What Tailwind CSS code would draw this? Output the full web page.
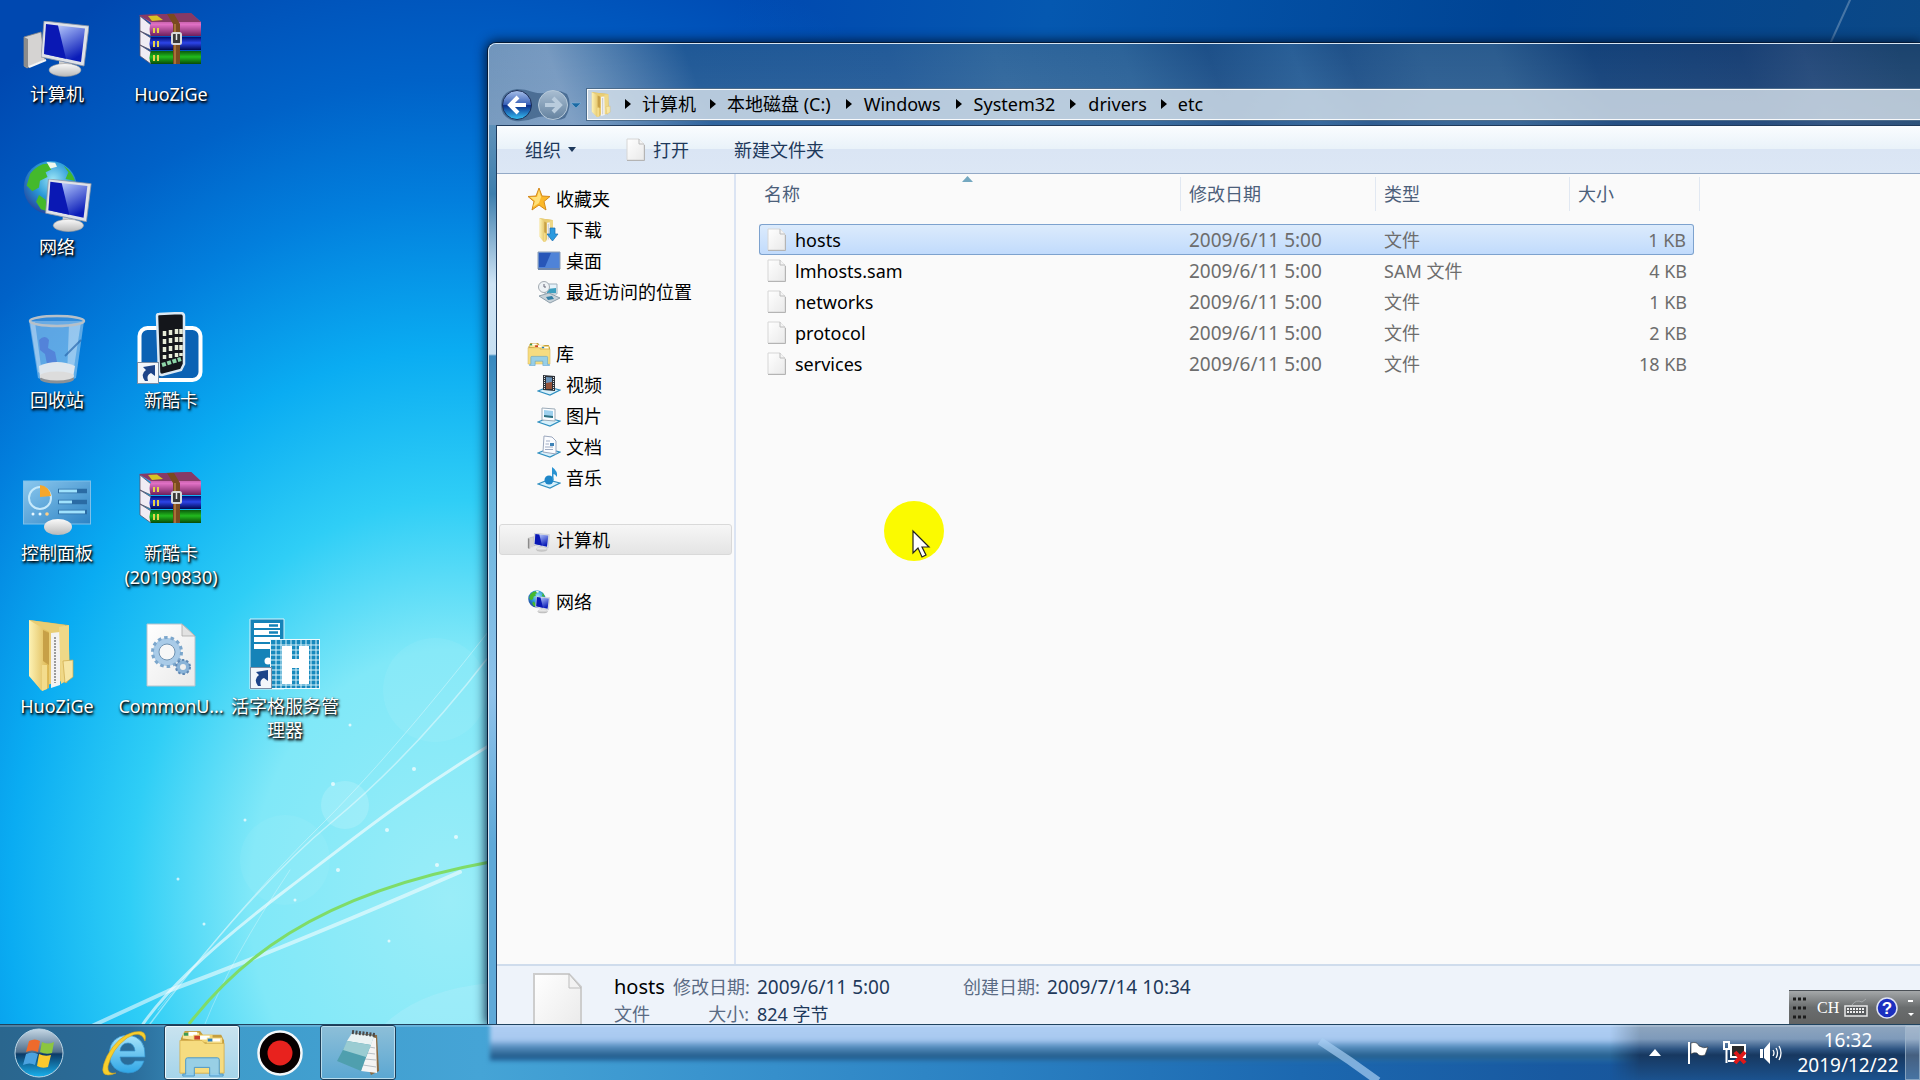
<!DOCTYPE html>
<html lang="zh-CN">
<head>
<meta charset="utf-8">
<title>etc</title>
<script src="https://cdn.jsdelivr.net/npm/@tailwindcss/browser@4"></script>
</head>
<body class="flex h-screen flex-col overflow-hidden bg-[#0048b0] font-['Noto_Sans','Noto_Sans_CJK_SC',sans-serif] text-[18px] leading-6 text-black">

<!-- Shared icon symbols -->
<svg class="absolute h-0 w-0" aria-hidden="true">
  <defs>
    <linearGradient id="screen" x1="0" y1="0" x2="0.6" y2="1"><stop offset="0" stop-color="#e8eeff"/><stop offset=".35" stop-color="#8fa2ee"/><stop offset="1" stop-color="#0a1cb8"/></linearGradient>
    <linearGradient id="metal" x1="0" y1="0" x2="0" y2="1"><stop offset="0" stop-color="#fafafa"/><stop offset="1" stop-color="#b9b9b9"/></linearGradient>
    <radialGradient id="earth" cx=".55" cy=".35" r=".7"><stop offset="0" stop-color="#9be4f6"/><stop offset=".5" stop-color="#2b9ad8"/><stop offset="1" stop-color="#23409a"/></radialGradient>
    <linearGradient id="folder" x1="0" y1="0" x2="1" y2="0"><stop offset="0" stop-color="#fdf2b4"/><stop offset="1" stop-color="#dcb650"/></linearGradient>
    <linearGradient id="pink" x1="0" y1="0" x2="0" y2="1"><stop offset="0" stop-color="#7d3560"/><stop offset=".5" stop-color="#e070c4"/><stop offset="1" stop-color="#6d1f5c"/></linearGradient>
    <linearGradient id="blue" x1="0" y1="0" x2="0" y2="1"><stop offset="0" stop-color="#000c70"/><stop offset=".45" stop-color="#2c44e8"/><stop offset="1" stop-color="#000850"/></linearGradient>
    <linearGradient id="green" x1="0" y1="0" x2="0" y2="1"><stop offset="0" stop-color="#0b5a0b"/><stop offset=".45" stop-color="#22bb1e"/><stop offset="1" stop-color="#084a08"/></linearGradient>
    <linearGradient id="paper" x1="0" y1="0" x2="1" y2="1"><stop offset="0" stop-color="#ffffff"/><stop offset="1" stop-color="#e9e9e9"/></linearGradient>
    <linearGradient id="glass" x1="0" y1="0" x2="1" y2="1"><stop offset="0" stop-color="#8cc8ee"/><stop offset="1" stop-color="#2d83c4"/></linearGradient>

    <symbol id="i-monitor" viewBox="0 0 48 56">
      <path d="M3 0 48 5 43 45 0 36Z" fill="#dfe2e8" stroke="#8c94a3" stroke-width=".8"/>
      <path d="M5 3 44 7.500 40 41 3 33Z" fill="url(#screen)"/>
      <path d="M5 3 17 4.500 25 37.800 3 33Z" fill="#0a18b4"/>
      <path d="M18 40 31 43 30 49 18 48Z" fill="#cfcfcf"/>
      <ellipse cx="24" cy="49" rx="16" ry="6.500" fill="url(#metal)" stroke="#9a9a9a" stroke-width=".6"/>
    </symbol>
    <symbol id="i-computer" viewBox="0 0 72 72">
      <path d="M3 31 20 26 24 54 6 62 3 60Z" fill="#d5d3d2" stroke="#858585" stroke-width=".8"/>
      <path d="M3 31 7 33 7 62 3 60Z" fill="#8b8b8b"/>
      <path d="M8 61 25 54" stroke="#f5f5f5" stroke-width="2"/>
      <use href="#i-monitor" x="20" y="15" width="48" height="56"/>
    </symbol>
    <symbol id="i-network" viewBox="0 0 72 78">
      <circle cx="29" cy="29" r="28" fill="url(#earth)"/>
      <path d="M8 14Q17 3 27 4L30 10 24 13 26 18 18 22 17 29 10 33 4 27ZM43 6Q52 12 55 22L45 20 48 13ZM17 37 24 42 26 54 19 52 14 44Z" fill="#44b92c"/>
      <path d="M25 2 34 3 36 7 29 9Z" fill="#eef8ee"/>
      <use href="#i-monitor" x="23" y="20" width="50" height="56"/>
    </symbol>
    <symbol id="i-rar" viewBox="0 0 64 52">
      <path d="M1 3 12 12V23L1 18ZM1 18 12 25V37L1 32ZM1 32 12 39V51L1 43Z" fill="#f0ecf4" stroke="#5a5266" stroke-width=".8"/>
      <path d="M0 2 52 0 62 9V23H12Q9 16 12 10Z" fill="url(#pink)"/>
      <path d="M0 2 52 0 62 9H12Z" fill="#863a66"/>
      <path d="M9 3 18 2.500 24 7 13 8Z" fill="#d8c224"/>
      <path d="M12 24H62V37H12Q9 31 12 24Z" fill="url(#blue)"/>
      <path d="M12 38H62V51H12Q9 45 12 38Z" fill="url(#green)"/>
      <path d="M15 15V20M19 15V20M15 28V34M19 28V34M15 42V48M19 42V48" stroke="#e6d34a" stroke-width="2"/>
      <path d="M28 1H35L41 11V51H34V11Z" fill="#7a4a20"/>
      <path d="M36 11V51" stroke="#b98140" stroke-width="1.500"/>
      <rect x="33" y="20" width="9" height="11" rx="1.500" fill="#393939" stroke="#d9d9d9" stroke-width="2"/>
      <path d="M37.500 21V27" stroke="#e8e8e8" stroke-width="1.500"/>
    </symbol>
    <symbol id="i-page" viewBox="0 0 20 24">
      <path d="M1 1H13L18 6V22H1Z" fill="url(#paper)" stroke="#d6d6d6" stroke-width="1"/>
      <path d="M13 1V6H18" fill="#f4f4f4" stroke="#bcbcbc" stroke-width="1"/>
      <path d="M1 22.500H18.500V7" fill="none" stroke="#b4b4b4" stroke-width="1"/>
    </symbol>
    <symbol id="i-shortcut" viewBox="0 0 22 22">
      <rect x=".5" y=".5" width="21" height="21" fill="#f3f6fa" stroke="#7d8ea4"/>
      <path d="M8 19Q3 12 9 8L6 5 18 3V14L14 11Q9 13 11 19Z" fill="#1d4488"/>
    </symbol>
    <symbol id="i-libfolder" viewBox="0 0 50 50">
      <path d="M3 10 7 2H23L26 6H45L48 12V46H3Z" fill="#c59e3e"/>
      <path d="M5 10V4H22V12Z" fill="#f9e59a"/><path d="M6 4H11V7H6Z" fill="#3d9a55"/><path d="M11 3H20V7H11Z" fill="#fff"/>
      <path d="M16 14V6H36V14Z" fill="#f4d673"/><path d="M17 7H23V11H17Z" fill="#c8402e"/><path d="M23 7H33V11H23Z" fill="#fff"/>
      <path d="M30 16V9H46V16Z" fill="#f7de86"/><path d="M31 10H36V13H31Z" fill="#2a7fc0"/><path d="M36 10H44V13H36Z" fill="#fff"/>
      <path d="M2 12H25L28 15H48V46H2Z" fill="#f6dc80" stroke="#d2ac4a" stroke-width=".8"/>
      <path d="M8 32Q8 30 10 30H41Q43 30 43 32V47H47V49H33V40H17V49H5V47H8Z" fill="#8ecdf0" stroke="#4a96c8" stroke-width="1" fill-opacity=".9"/>
    </symbol>
    <symbol id="i-folder" viewBox="0 0 48 72">
      <path d="M2 1 41 6 43 50 40 64 18 58Z" fill="#d9b758"/>
      <path d="M2 1 38 6 38 61 20 66 14 71 2 56Z" fill="#e9cd74"/>
      <path d="M24 14 33 13 33 66 24 69Z" fill="#f3f3f3"/><path d="M28 18V64" stroke="#9c9c9c" stroke-width="2" stroke-dasharray="2 1"/>
      <path d="M32 8 42 6 42 60 34 65Z" fill="#efd887"/>
      <path d="M2 1 22 13V69L15 72 2 57Z" fill="url(#folder)"/>
      <path d="M16 11 22 14V46L16 42Z" fill="#c7a047"/>
      <path d="M15 46H20V70L15 72Z" fill="#f3dc8c"/>
      <path d="M36 42 46 41V58L38 64Z" fill="#f7e6a4" stroke="#cda94b" stroke-width=".7"/>
    </symbol>
    <symbol id="i-tray" viewBox="0 0 24 10"><path d="M1 5 11 1 23 4 13 9Z" fill="#d8f0fb" stroke="#2f8fc0" stroke-width="1.200"/></symbol>
    <linearGradient id="orb" x1="0" y1="0" x2="0" y2="1"><stop offset="0" stop-color="#c4d6e4"/><stop offset=".48" stop-color="#4f6f8c"/><stop offset=".52" stop-color="#0c3a66"/><stop offset="1" stop-color="#19b2ee"/></linearGradient>
    <linearGradient id="navon" x1="0" y1="0" x2="0" y2="1"><stop offset="0" stop-color="#a9c1ea"/><stop offset=".48" stop-color="#3a62b8"/><stop offset=".52" stop-color="#0b2f8c"/><stop offset="1" stop-color="#39c3f5"/></linearGradient>
    <linearGradient id="navoff" x1="0" y1="0" x2="0" y2="1"><stop offset="0" stop-color="#a9bed2"/><stop offset="1" stop-color="#64829f"/></linearGradient>
    <linearGradient id="iebar" x1="0" y1="0" x2="0" y2="1"><stop offset="0" stop-color="#a8e4fb"/><stop offset="1" stop-color="#2fa6e6"/></linearGradient>
  </defs>
</svg>

<main class="relative min-h-0 flex-1 overflow-hidden bg-[linear-gradient(100deg,transparent_35%,#0558b0_50%,#004494_72%,#104a80_100%),radial-gradient(ellipse_800px_1000px_at_450px_900px,#9aedf8_0%,#80e8f8_25%,#2fcef6_40%,#0aacf2_55%,#027fdd_70%,#0062c8_82%,#0048b0_100%)]">
  <!-- Wallpaper light trails -->
  <svg class="absolute inset-0 h-full w-full" aria-hidden="true">
    <circle cx="435" cy="690" r="52" fill="#fff" opacity=".06"/><circle cx="345" cy="805" r="24" fill="#fff" opacity=".15"/><circle cx="285" cy="860" r="45" fill="#fff" opacity=".05"/>
    <path d="M385 1024Q420 990 490 983V1024Z" fill="#b8eefb" opacity=".3"/>
    <g fill="none" stroke="#fff" stroke-linecap="round">
      <path d="M143 1024C170 985 220 940 286 890S400 800 490 745" stroke-width="3" opacity=".6"/>
      <path d="M150 1024Q250 890 332 822T490 655" stroke-width="1.500" opacity=".45"/>
      <path d="M158 1010Q250 895 320 826T488 632" stroke-width="1" opacity=".35"/>
      <path d="M92 1026 168 991Q280 950 460 872" stroke-width="4" opacity=".55"/>
      <path d="M205 1024Q230 960 290 870" stroke-width="1" opacity=".3"/>
      <path d="M1830 44 1850 0" stroke-width="2" opacity=".25"/>
    </g>
    <path d="M189 1024C235 965 310 895 490 862" fill="none" stroke="#7fdc68" stroke-width="3"/>
    <g fill="#fff" opacity=".7"><circle cx="333" cy="784" r="2"/><circle cx="338" cy="870" r="2"/><circle cx="414" cy="769" r="2"/><circle cx="387" cy="830" r="2"/><circle cx="456" cy="837" r="2"/><circle cx="437" cy="865" r="2"/><circle cx="204" cy="924" r="1.500"/><circle cx="245" cy="820" r="1.500"/><circle cx="389" cy="941" r="1.500"/><circle cx="295" cy="900" r="1.500"/><circle cx="350" cy="725" r="1.500"/><circle cx="178" cy="879" r="1.500"/></g>
  </svg>

  <!-- Desktop shortcuts -->
  <div class="relative grid w-max auto-rows-[153px] grid-cols-[114px_114px_114px] pt-[6px] text-center text-white [text-shadow:1px_1px_2px_#000,1px_2px_3px_#000]">
    <div class="col-start-1 row-start-1 flex flex-col items-center">
      <svg class="h-[76px] w-[72px] pb-[4px]" viewBox="0 0 72 72"><use href="#i-computer" width="72" height="72"/></svg><span>计算机</span>
    </div>
    <div class="col-start-2 row-start-1 flex flex-col items-center">
      <svg class="h-[76px] w-[72px]" viewBox="0 0 72 76"><use href="#i-rar" x="4" y="7" width="64" height="52"/></svg><span>HuoZiGe</span>
    </div>
    <div class="col-start-1 row-start-2 flex flex-col items-center">
      <svg class="h-[76px] w-[72px]" viewBox="0 0 72 76"><use href="#i-network" x="1" y="1" width="70" height="74"/></svg><span>网络</span>
    </div>
    <div class="col-start-1 row-start-3 flex flex-col items-center">
      <svg class="h-[76px] w-[72px]" viewBox="0 0 72 76">
        <path d="M8 9 63 9 55 66Q36 75 17 66Z" fill="#cfe6f8" fill-opacity=".45"/>
        <path d="M9 10 14 10 21 62 17 60ZM48 12 60 10 52 62 46 64Z" fill="#fff" opacity=".35"/>
        <path d="M18 28Q24 22 28 28L27 36 34 40 36 50 26 52 24 42 19 38Z" fill="#4a5fcd" opacity=".5"/><path d="M44 44 60 28" stroke="#2b69ae" stroke-width="2" opacity=".7"/>
        <path d="M18 54Q36 46 54 54L52 66Q36 73 19 66Z" fill="#dfe7ee"/><ellipse cx="36" cy="67" rx="17" ry="4.500" fill="#8c9196"/><ellipse cx="36" cy="64" rx="17" ry="4.500" fill="#dcdcdc"/>
        <ellipse cx="36" cy="9" rx="27" ry="5" fill="#7db5e6" fill-opacity=".4" stroke="#b7c0c8" stroke-width="2.500"/>
      </svg><span>回收站</span>
    </div>
    <div class="col-start-2 row-start-3 flex flex-col items-center">
      <svg class="h-[76px] w-[72px]" viewBox="0 0 72 76">
        <rect x="4.500" y="16" width="61" height="52" rx="8" fill="#0b62b4" stroke="#fff" stroke-width="4"/>
        <path d="M22 4Q22 2 24 2L45 1Q49 1 49 4V52L46 58 27 63Q24 63 24 60Z" fill="#14161b" stroke="#dbe9f4" stroke-width="2.500"/>
        <path d="M29.500 19V47M35.500 18V46M41.500 17V45M46 17V44" stroke="#e7ecd8" stroke-width="3.500" stroke-dasharray="5 3"/><path d="M27 53 46 47" stroke="#8ed6a8" stroke-width="4" stroke-dasharray="4 1.500"/>
        <use href="#i-shortcut" x="2" y="50" width="22" height="22"/>
      </svg><span>新酷卡</span>
    </div>
    <div class="col-start-1 row-start-4 flex flex-col items-center">
      <svg class="h-[76px] w-[72px]" viewBox="0 0 72 76">
        <rect x="2.500" y="16" width="67" height="43" fill="url(#glass)" stroke="#7fc0ea"/>
        <circle cx="19" cy="33" r="11" fill="none" stroke="#c6e9fb" stroke-width="2"/><path d="M19 32V20A12 12 0 0 1 30 31Z" fill="#f6a72c"/>
        <path d="M37 26H66M37 37H66M37 47H66" stroke="#2a6ba4" stroke-width="4.500"/><path d="M38 26H56M38 37H51M38 47H64" stroke="#9fe2fd" stroke-width="3"/>
        <circle cx="12" cy="49" r="1.500" fill="#e8f7ff"/><circle cx="19" cy="49" r="1.500" fill="#e8f7ff"/><circle cx="26" cy="49" r="1.800" fill="#ffcf87"/>
        <ellipse cx="37" cy="62" rx="14" ry="8" fill="url(#metal)"/>
      </svg><span>控制面板</span>
    </div>
    <div class="col-start-2 row-start-4 flex flex-col items-center">
      <svg class="h-[76px] w-[72px]" viewBox="0 0 72 76"><use href="#i-rar" x="4" y="7" width="64" height="52"/></svg><span>新酷卡</span><span>(20190830)</span>
    </div>
    <div class="col-start-1 row-start-5 flex flex-col items-center">
      <svg class="h-[76px] w-[72px]" viewBox="0 0 72 76"><use href="#i-folder" x="6" y="1" width="48" height="72"/></svg><span>HuoZiGe</span>
    </div>
    <div class="col-start-2 row-start-5 flex flex-col items-center">
      <svg class="h-[76px] w-[72px]" viewBox="0 0 72 76">
        <path d="M12 6H47L60 18V68H12Z" fill="url(#paper)" stroke="#b9c3cc"/><path d="M47 6V18H60Z" fill="#e2e2e2" stroke="#aaa" stroke-width=".8"/>
        <circle cx="32" cy="34" r="11" fill="none" stroke="#a9cbe8" stroke-width="6"/><circle cx="32" cy="34" r="14.500" fill="none" stroke="#7ba6cc" stroke-width="3" stroke-dasharray="3.500 3"/><circle cx="32" cy="34" r="8" fill="#f7f7f7" stroke="#6f92b2"/>
        <circle cx="48" cy="49" r="5" fill="none" stroke="#8ab3d8" stroke-width="4"/><circle cx="48" cy="49" r="7" fill="none" stroke="#5f88b4" stroke-width="2" stroke-dasharray="2.500 2"/>
      </svg><span>CommonU...</span>
    </div>
    <div class="col-start-3 row-start-5 flex flex-col items-center">
      <svg class="h-[76px] w-[72px]" viewBox="0 0 72 76">
        <path d="M1 1H35V71H1Z" fill="#1583b8" stroke="#d8f3fb"/>
        <path d="M5 5H31V10H5ZM5 12H31V17H5ZM5 19H31V24H5ZM5 26H21V31H5Z" fill="#fff"/><path d="M20 7.500H29M20 14.500H29" stroke="#1583b8" stroke-width="2.500"/><circle cx="19" cy="43" r="3.500" fill="#fff"/>
        <rect x="21" y="21" width="50" height="50" fill="#eefafd"/>
        <path d="M22 22H70V70H22Z" fill="#1789bd"/>
        <path d="M22 27H70M22 32H70M22 37H70M22 42H70M22 47H70M22 52H70M22 57H70M22 62H70M22 67H70M27 22V70M32 22V70M37 22V70M42 22V70M47 22V70M52 22V70M57 22V70M62 22V70M67 22V70" stroke="#d6f2fb"/>
        <path d="M33 28H43V41H50V28H60V66H50V50H43V66H33Z" fill="#fff"/>
        <use href="#i-shortcut" x="1" y="49" width="22" height="22"/>
      </svg><span class="w-[112px]">活字格服务管理器</span>
    </div>
  </div>

  <!-- Explorer window -->
  <section class="absolute top-[43px] right-0 bottom-0 left-[488px] flex flex-col rounded-tl-lg border-t border-l border-[#d7e6f4] bg-[linear-gradient(to_bottom,#6e93ba_0px,#5b8fb8_90px,#3e7fae_150px,#cfe4f5_240px,#c8e0f2_310px,#3888be_312px,#6bb6de_450px,#8fc2ea_650px,#5fa9d8_800px)] pl-[7px] shadow-[0_0_12px_2px_#001838,0_0_0_1px_#0a2038]">
    <div class="-ml-[7px] flex h-[81px] flex-col justify-end rounded-tl-lg bg-[linear-gradient(to_top,rgba(255,255,255,.08),transparent),linear-gradient(70deg,#6e93ba_0px,#7699c0_80px,#5b86b4_120px,#1f5896_210px,#225a98_400px,#2f669c_500px,#2b6298_620px,#1c4f88_700px,#285e96_780px,#1f5189_830px,#2a5c90_900px,#2a5b8e_970px,#14427a_1060px,#173f74_1200px,#24497a_1260px,#1b436e_1350px)] pb-[4px]">
      <div class="flex h-[33px] items-center">
        <svg class="ml-[10px] h-[34px] w-[86px] shrink-0" viewBox="0 0 86 34" role="img" aria-label="后退 前进">
          <path d="M18 1Q26 1 34 4 44 7 52 3 60 1 68 6 74 17 66 30 58 34 50 30 43 27 36 30 26 34 16 33 2 30 2 17 2 3 18 1Z" fill="#2d5077" opacity=".6"/>
          <circle cx="18" cy="17" r="14.500" fill="url(#navon)" stroke="#1c2e55"/><path d="M19 9 11 17 19 25M12 17H27" fill="none" stroke="#fff" stroke-width="4"/>
          <circle cx="54" cy="17" r="14.500" fill="url(#navoff)" stroke="#b7cada"/><path d="M54 10 61 17 54 24M60 17H46" fill="none" stroke="#b9ccdd" stroke-width="4"/>
          <path d="M72 15H82L77 20Z" fill="#1c6aa4" stroke="#7fb3d8" stroke-width=".6"/>
        </svg>
        <nav aria-label="地址" class="ml-[2px] flex h-[31px] flex-1 items-center border border-r-0 border-white/90 bg-[#d9e4ec]/80 pl-[3px] shadow-[0_0_0_1px_#4c6c8c]">
          <svg class="h-[25px] w-[20px]" viewBox="0 0 48 72" preserveAspectRatio="none"><use href="#i-folder" width="48" height="72"/></svg>
          <ol class="-mt-[2px] flex items-center">
            <li class="flex items-center"><svg class="mr-[11px] ml-[14px] h-[10px] w-[6px]" viewBox="0 0 6 10"><path d="M0 0 6 5 0 10Z"/></svg><a href="#">计算机</a></li>
            <li class="flex items-center"><svg class="mr-[11px] ml-[14px] h-[10px] w-[6px]" viewBox="0 0 6 10"><path d="M0 0 6 5 0 10Z"/></svg><a href="#">本地磁盘 (C:)</a></li>
            <li class="flex items-center"><svg class="mr-[12px] ml-[15px] h-[10px] w-[6px]" viewBox="0 0 6 10"><path d="M0 0 6 5 0 10Z"/></svg><a href="#">Windows</a></li>
            <li class="flex items-center"><svg class="mr-[12px] ml-[15px] h-[10px] w-[6px]" viewBox="0 0 6 10"><path d="M0 0 6 5 0 10Z"/></svg><a href="#">System32</a></li>
            <li class="flex items-center"><svg class="mr-[12px] ml-[15px] h-[10px] w-[6px]" viewBox="0 0 6 10"><path d="M0 0 6 5 0 10Z"/></svg><a href="#">drivers</a></li>
            <li class="flex items-center"><svg class="mr-[11px] ml-[14px] h-[10px] w-[6px]" viewBox="0 0 6 10"><path d="M0 0 6 5 0 10Z"/></svg><a href="#">etc</a></li>
          </ol>
        </nav>
      </div>
    </div>

    <div class="flex min-h-0 flex-1 flex-col border-t border-l border-[#1f3a5c] bg-[#fafafa]">
      <div class="flex h-[48px] shrink-0 items-center border-b border-[#93a9c6] bg-[linear-gradient(to_bottom,#fafdff_0%,#e9f2f9_48%,#dae5f4_50%,#dce7f5_100%)] pl-[28px] text-[#1e395b]">
        <button class="flex w-[101px] items-center gap-[7px]">组织<svg class="h-[5px] w-[8px]" viewBox="0 0 8 5"><path d="M0 0H8L4 5Z" fill="#1e395b"/></svg></button>
        <button class="flex w-[108px] items-center gap-[7px]"><svg class="h-[24px] w-[20px]"><use href="#i-page"/></svg>打开</button>
        <button>新建文件夹</button>
      </div>

      <div class="flex min-h-0 flex-1">
        <nav aria-label="导航窗格" class="w-[239px] shrink-0 border-r-2 border-[#dbe4f3] pt-[9px] pr-[2px] pl-[2px] *:flex *:h-[31px] *:items-center">
          <a href="#" class="gap-[5px] pl-[28px]"><svg class="h-[24px] w-[24px]" viewBox="0 0 24 24"><path d="M12 1 15 9 23 9.500 17 14.500 19 23 12 18 5 23 7 14.500 1 9.500 9 9Z" fill="#fbb829" stroke="#d48a1c"/><path d="M12 3 14 10 12 16 6 20 8 14 3 10 10 10Z" fill="#ffe07a"/></svg>收藏夹</a>
          <a href="#" class="gap-[5px] pl-[38px]"><svg class="h-[24px] w-[24px]" viewBox="0 0 24 24"><use href="#i-folder" x="2" y="0" width="16" height="24"/><path d="M13 10H18V16H21L15.500 23 10 16H13Z" fill="#2b9adf" stroke="#1b6fb0" stroke-width=".7"/></svg>下载</a>
          <a href="#" class="gap-[5px] pl-[38px]"><svg class="h-[24px] w-[24px]" viewBox="0 0 24 24"><path d="M1 3H23V20H1Z" fill="#4f83d8" stroke="#8d9db3"/><path d="M2 4H14L8 18H2Z" fill="#2856b8"/><path d="M1 19H23V21H1Z" fill="#6f87ab"/></svg>桌面</a>
          <a href="#" class="gap-[5px] pl-[38px]"><svg class="h-[24px] w-[24px]" viewBox="0 0 24 24"><path d="M8 4H20V14H8Z" fill="#e5f2fa" stroke="#9fb0bd"/><path d="M10 9 19 8V13H10Z" fill="#3c9fc0"/><circle cx="7" cy="7" r="5.500" fill="#eef2f5" stroke="#a3abb2"/><path d="M7 4V7H9" fill="none" stroke="#667"/><path d="M2 16 12 13 23 18 13 23Z" fill="#c7d2d9" stroke="#8fa0ac"/><path d="M9 17 15 16 17 19 11 20Z" fill="#347fa5"/></svg>最近访问的位置</a>
          <a href="#" class="mt-[31px] gap-[5px] pl-[28px]"><svg class="h-[24px] w-[24px]" viewBox="0 0 50 50"><use href="#i-libfolder" width="50" height="50"/></svg>库</a>
          <a href="#" class="gap-[5px] pl-[38px]"><svg class="h-[24px] w-[24px]" viewBox="0 0 24 24"><use href="#i-tray" y="13" width="24" height="10"/><path d="M6 2 18 3V18L6 17Z" fill="#2c3138"/><path d="M9 4 15 4.500V16L9 15.500Z" fill="#6b93b8"/><path d="M9 10 15 9V16H9Z" fill="#94533a"/><path d="M7.500 3V17M16.500 4V17" stroke="#e4e4e4" stroke-dasharray="1 1"/></svg>视频</a>
          <a href="#" class="gap-[5px] pl-[38px]"><svg class="h-[24px] w-[24px]" viewBox="0 0 24 24"><use href="#i-tray" y="13" width="24" height="10"/><path d="M5 4 18 5V17L5 16Z" fill="#fbfdff" stroke="#9cabb8"/><path d="M7 6 16 7V14L7 13Z" fill="#9dd0ee"/><path d="M7 11 16 12V14L7 13Z" fill="#2e7182"/></svg>图片</a>
          <a href="#" class="gap-[5px] pl-[38px]"><svg class="h-[24px] w-[24px]" viewBox="0 0 24 24"><use href="#i-tray" y="13" width="24" height="10"/><path d="M7 1 15 2 19 6V19L6 17Z" fill="#fbfcff" stroke="#9ca8be"/><path d="M9 6H13M8.500 9H12M8 12H16M8 14.500H16" stroke="#a0acc4"/><path d="M13 8H17V11H13Z" fill="#3f83b8"/></svg>文档</a>
          <a href="#" class="gap-[5px] pl-[38px]"><svg class="h-[24px] w-[24px]" viewBox="0 0 24 24"><use href="#i-tray" y="13" width="24" height="10"/><circle cx="12" cy="14" r="4.500" fill="#1e86c8"/><path d="M15 14V1Q21 5 20 11 18 8 16.500 8V14Z" fill="#2a93d2"/></svg>音乐</a>
          <a href="#" aria-current="page" class="mt-[31px] gap-[5px] rounded-[3px] border border-[#d9d9d9] bg-linear-to-b from-[#f6f6f6] to-[#e4e4e4] pl-[27px]"><svg class="h-[24px] w-[24px]" viewBox="0 0 72 72"><use href="#i-computer" width="72" height="72"/></svg>计算机</a>
          <a href="#" class="mt-[31px] gap-[5px] pl-[28px]"><svg class="h-[24px] w-[24px]" viewBox="0 0 72 78"><use href="#i-network" width="72" height="78"/></svg>网络</a>
        </nav>

        <div class="relative min-w-0 flex-1 pl-[23px]">
          <svg class="absolute top-[2px] left-[226px] h-[6px] w-[11px]" viewBox="0 0 11 6"><path d="M0 6 5.500 0 11 6Z" fill="#74a8c0"/></svg>
          <table class="w-[935px] table-fixed border-separate border-spacing-0 text-left text-[#6d6d6d]">
            <colgroup><col class="w-[421px]"><col class="w-[195px]"><col class="w-[194px]"><col class="w-[125px]"></colgroup>
            <thead class="text-[#4c607a]">
              <tr class="*:h-[50px] *:p-0 *:pb-[10px] *:font-normal">
                <th><span class="pl-[5px]">名称</span></th>
                <th><span class="flex h-[34px] items-center border-l border-[#e1e8f2] pl-[8px]">修改日期</span></th>
                <th><span class="flex h-[34px] items-center border-l border-[#e1e8f2] pl-[8px]">类型</span></th>
                <th><span class="-mr-[6px] flex h-[34px] items-center border-x border-[#e1e8f2] pl-[8px]">大小</span></th>
              </tr>
            </thead>
            <tbody class="[&_td]:h-[31px] [&_td]:p-0 [&_td:nth-child(2)]:pl-[9px] [&_td:nth-child(2)]:text-[19px] [&_td:nth-child(3)]:pl-[9px] [&_td:nth-child(4)]:pr-[7px] [&_td:nth-child(4)]:text-right">
              <tr class="*:border-y *:border-[#7da2ce] *:bg-linear-to-b *:from-[#dcebfc] *:to-[#c1dbfc]">
                <td class="rounded-l-[3px] border-l"><span class="flex items-center gap-[8px] pl-[7px] text-black"><svg class="h-[24px] w-[20px]"><use href="#i-page"/></svg>hosts</span></td><td>2009/6/11 5:00</td><td>文件</td><td class="rounded-r-[3px] border-r">1 KB</td>
              </tr>
              <tr><td><span class="flex items-center gap-[8px] pl-[8px] text-black"><svg class="h-[24px] w-[20px]"><use href="#i-page"/></svg>lmhosts.sam</span></td><td>2009/6/11 5:00</td><td>SAM 文件</td><td>4 KB</td></tr>
              <tr><td><span class="flex items-center gap-[8px] pl-[8px] text-black"><svg class="h-[24px] w-[20px]"><use href="#i-page"/></svg>networks</span></td><td>2009/6/11 5:00</td><td>文件</td><td>1 KB</td></tr>
              <tr><td><span class="flex items-center gap-[8px] pl-[8px] text-black"><svg class="h-[24px] w-[20px]"><use href="#i-page"/></svg>protocol</span></td><td>2009/6/11 5:00</td><td>文件</td><td>2 KB</td></tr>
              <tr><td><span class="flex items-center gap-[8px] pl-[8px] text-black"><svg class="h-[24px] w-[20px]"><use href="#i-page"/></svg>services</span></td><td>2009/6/11 5:00</td><td>文件</td><td>18 KB</td></tr>
            </tbody>
          </table>
        </div>
      </div>

      <footer class="flex h-[60px] shrink-0 overflow-hidden border-t-2 border-[#cfdcec] bg-[#eef3fa] pt-[7px] pl-[36px]">
        <svg class="h-[62px] w-[50px] shrink-0" viewBox="0 0 50 62"><path d="M1 1H36L48 14V61H1Z" fill="url(#paper)" stroke="#cdcdcd" stroke-width="2"/><path d="M36 1V15H48Z" fill="#f2f2f2" stroke="#bdbdbd"/></svg>
        <dl class="ml-[31px] grid grid-cols-[59px_76px_214px_84px_auto] grid-rows-[27px_27px] items-center whitespace-nowrap text-[#1e395b]">
          <dd class="text-[20px] text-black">hosts</dd><dt class="text-[#5a6b84]">修改日期:</dt><dd class="pl-[8px] text-[19px]">2009/6/11 5:00</dd><dt class="text-[#5a6b84]">创建日期:</dt><dd class="text-[19px]">2009/7/14 10:34</dd>
          <dd class="text-[#5a6b84]">文件</dd><dt class="text-right text-[#5a6b84]">大小:</dt><dd class="pl-[8px]">824 字节</dd>
        </dl>
      </footer>
    </div>
  </section>

  <!-- Pointer with its highlight ring -->
  <svg class="absolute top-[500px] left-[883px] h-[62px] w-[62px]" viewBox="0 0 62 62" aria-hidden="true"><circle cx="31" cy="31" r="30" fill="#fbfa00"/><path d="M30 31V53L35 48 39 57 43 55 39 47H46Z" fill="#fff" stroke="#222" stroke-width="1.200"/></svg>

  <!-- Language bar -->
  <div class="absolute right-0 bottom-0 flex h-[34px] w-[131px] items-center border-t border-[#4b5056] bg-linear-to-b from-[#a5a8aa] via-[#6a6d6e] to-[#626363] font-['Liberation_Serif',serif] text-[16px] text-white">
    <svg class="ml-[4px] h-[24px] w-[14px]" viewBox="0 0 14 24"><path d="M0 3H14M0 12H14M0 21H14" stroke="#1c1c1c" stroke-width="3" stroke-dasharray="3 2"/></svg>
    <button class="ml-[10px] w-[20px]">CH</button>
    <svg class="ml-[7px] h-[20px] w-[24px]" viewBox="0 0 24 20"><path d="M8 7Q12 1 18 4L22 1" fill="none" stroke="#a4a8aa"/><rect x="1" y="8" width="22" height="10" fill="#585b5d" stroke="#e8e8e8" stroke-width="1.500"/><path d="M3 11H21M3 14H21" stroke="#eee" stroke-width="2" stroke-dasharray="2 1"/></svg>
    <svg class="ml-[8px] h-[22px] w-[22px]" viewBox="0 0 22 22"><circle cx="11" cy="11" r="10" fill="#1b2fc0" stroke="#dfe3f4" stroke-width="1.500"/><text x="11" y="17" text-anchor="middle" font-family="Liberation Sans, sans-serif" font-weight="bold" font-size="17" fill="#fff">?</text></svg>
    <svg class="ml-[10px] h-[18px] w-[6px]" viewBox="0 0 6 18"><path d="M0 2H5" stroke="#fff" stroke-width="2"/><path d="M0 14H6L3 17Z" fill="#fff"/></svg>
  </div>
</main>

<!-- Taskbar -->
<footer class="relative flex h-[56px] shrink-0 items-stretch overflow-hidden border-t border-[#20435f] bg-[linear-gradient(to_right,#2a668e_0px,#2a6c9a_130px,#3f9ccb_230px,#45a4d6_480px,#3a94ce_700px,#2a80c2_1000px,#1c68b0_1300px,#1859a0_1560px,#1a4f8c_100%)] text-white">
  <div class="absolute -top-[4px] right-0 left-[490px] h-[40px] bg-[linear-gradient(to_bottom,#b0cff4_0px,#a8c9f0_19px,#5d93c4_25px,#4079a8_30px,#205a8a_36px,#2d76ae_40px)] blur-[2px]"></div>
  <div class="absolute top-0 right-0 h-full w-[310px] bg-[linear-gradient(to_bottom,#8fa6bf_0px,#7e9aba_14px,#2e5583_24px,#173860_30px,#1b5390_56px)] [mask-image:linear-gradient(to_right,transparent,#000_30px)]"></div>
  <svg class="absolute inset-0 h-full w-full" aria-hidden="true"><path d="M1320 16 1350 36 1378 56" fill="none" stroke="#a6cdf2" stroke-width="8" opacity=".7"/><path d="M0 1H1920" stroke="#fff" opacity=".35"/></svg>

  <div class="relative flex flex-1 items-stretch">
    <button aria-label="开始" class="ml-[12px] w-[52px]"><svg class="h-[54px] w-[52px]" viewBox="0 0 52 54">
      <circle cx="27" cy="27" r="24" fill="url(#orb)" stroke="#bcd6e6"/>
      <path d="M17 15Q23 12 28 15L26 26Q20 23 14 26Z" fill="#ee6a2c"/><path d="M30 16Q36 19 42 16L40 27Q34 29 28 26Z" fill="#8cc63f"/><path d="M14 28Q20 25 26 28L23 39Q18 36 11 39Z" fill="#4ba3e0"/><path d="M27 28Q33 31 39 29L36 41Q30 43 25 40Z" fill="#fbc92d"/>
    </svg></button>
    <button aria-label="Internet Explorer" class="ml-[36px] w-[50px]"><svg class="h-[54px] w-[50px]" viewBox="0 0 50 54">
      <path d="M45 31H20Q21 39 28 39 33 39 35 35H44Q40 47 28 47 10 46 9 28 10 10 28 9 46 11 45 31ZM20 25H35Q34 17 28 17 21 17 20 25Z" fill="url(#iebar)" stroke="#3394cf" stroke-width=".7"/>
      <path d="M45 15Q48 3 34 6 18 10 7 30-2 49 8 49 12 49 16 47 7 49 8 40 12 23 27 12 41 3 45 15Z" fill="#f8cf2e" stroke="#d2a21c" stroke-width=".6"/>
    </svg></button>
    <button aria-label="资源管理器" class="ml-[14px] flex w-[76px] items-center justify-center rounded-[3px] border border-[#1c3d57] bg-linear-to-b from-[#c9e3ef] to-[#a4d4ea] shadow-[inset_0_0_0_1px_#eef8fc]"><svg class="h-[48px] w-[50px]"><use href="#i-libfolder"/></svg></button>
    <button aria-label="录制" class="ml-[16px] w-[48px]"><svg class="h-[54px] w-[48px]" viewBox="0 0 48 54"><circle cx="24" cy="27" r="21.500" fill="#060000" stroke="#f4f8fa" stroke-width="2.500"/><circle cx="24" cy="27" r="12.500" fill="#e8221e"/></svg></button>
    <button aria-label="记事本" class="ml-[16px] flex w-[76px] items-center justify-center rounded-[3px] border border-[#1c3d57] bg-linear-to-b from-[#8dbfd8] to-[#5aa7d2] shadow-[inset_0_0_0_1px_#b9dcec]"><svg class="h-[48px] w-[46px]" viewBox="0 0 46 48">
      <path d="M17 4 42 6 44 42 36 46Z" fill="#8a6a42"/><path d="M36 8 41 9 42 44 26 42Z" fill="#f4f4f4"/><path d="M34 18 40 19M32 24 40 25M30 30 41 31M28 36 41 38" stroke="#b8c0c6"/>
      <path d="M17 4 39 7 26 42 2 32Z" fill="#4f9fae"/><path d="M17 4 39 7 36 16 12 12Z" fill="#eaf3f3"/><path d="M12 12 36 16 31 28 8 21Z" fill="#9accd2"/><path d="M17 3 40 6" stroke="#4a4a4a" stroke-width="4" stroke-dasharray="2 1.500"/>
    </svg></button>

    <div class="ml-auto flex items-center">
      <svg class="h-[7px] w-[12px]" viewBox="0 0 12 7"><path d="M0 7 6 0 12 7Z" fill="#fff"/></svg>
      <svg class="ml-[26px] h-[24px] w-[22px]" viewBox="0 0 22 24"><path d="M1 1H3V23H1Z" fill="#fff"/><path d="M4 2Q10 0 12 5 17 8 21 6L18 14Q12 16 10 12 7 11 4 13Z" fill="#fff" stroke="#333" stroke-width=".6"/></svg>
      <svg class="ml-[14px] h-[24px] w-[25px]" viewBox="0 0 25 24"><path d="M1 1H6V8H1ZM3.500 8V22M5 20H14" fill="none" stroke="#fff" stroke-width="2"/><path d="M8 4H22V16H8Z" fill="#2b2b2b" stroke="#fff" stroke-width="2"/><path d="M12 11 22 22M22 11 12 22" stroke="#e01818" stroke-width="4"/></svg>
      <svg class="ml-[11px] h-[24px] w-[24px]" viewBox="0 0 24 24"><path d="M1 8H4V17H1ZM5 8 11 1V23L5 17Z" fill="#fff"/><path d="M14 9Q16 12 14 15M17 7Q20 12 17 17M20 5Q24 12 20 19" fill="none" stroke="#fff" stroke-width="1.300"/></svg>
      <time class="mr-[4px] ml-[12px] w-[106px] text-center text-[19px] leading-[25px]">16:32<br>2019/12/22</time>
      <button aria-label="显示桌面" class="h-full w-[15px] border border-[#9fb8cd]/70 bg-white/20"></button>
    </div>
  </div>
</footer>
</body>
</html>
